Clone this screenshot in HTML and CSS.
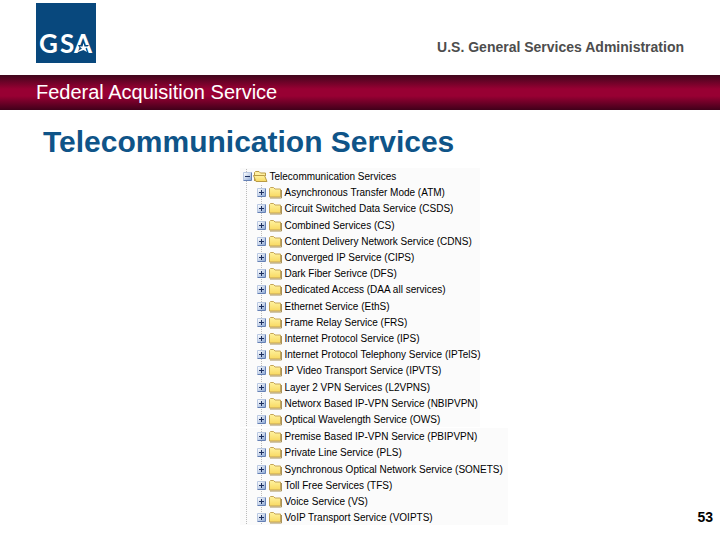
FILE: index.html
```html
<!DOCTYPE html>
<html lang="en">
<head>
  <meta charset="UTF-8">
  <title>Telecommunication Services</title>
  <link rel="stylesheet" href="styles.css">
</head>
<body>

  <svg class="sprites" aria-hidden="true">
    <defs>
      <linearGradient id="yellow" x1="0" y1="0" x2="0" y2="1">
        <stop offset="0" stop-color="#fff3a0"/>
        <stop offset="1" stop-color="#f8d860"/>
      </linearGradient>
      <linearGradient id="blue" x1="0" y1="0" x2="1" y2="1">
        <stop offset="0" stop-color="#ffffff"/>
        <stop offset="1" stop-color="#8faad6"/>
      </linearGradient>
    </defs>
    <symbol id="folder" viewBox="0 0 13 13">
      <path d="M1 12 H12.5 V4" fill="none" stroke="#a8925a"/>
      <path d="M.5 11 V2.5 L1.5 1.5 H4.5 L6 3 H11.5 V11 Z" fill="url(#yellow)" stroke="#c4a558"/>
    </symbol>
    <symbol id="folder-open" viewBox="0 0 15 13">
      <path d="M1.5 11 V2.5 L2.5 1.5 H6 L7.5 3 H12.5 V6" fill="#fff0a0" stroke="#b99b45"/>
      <path d="M.5 5.5 H11.5 L14 11.5 H3 Z" fill="url(#yellow)" stroke="#b99b45"/>
    </symbol>
    <symbol id="plus" viewBox="0 0 9 9">
      <path d="M.5 8.5 V.5 H8.5" fill="none" stroke="#b9c8e2"/>
      <rect x="1" y="1" width="7" height="7" fill="url(#blue)"/>
      <path d="M.5 8.5 H8.5 V.5" fill="none" stroke="#6580b4"/>
      <path d="M2 4.5 H7 M4.5 2 V7" stroke="#1c2f60"/>
    </symbol>
    <symbol id="minus" viewBox="0 0 9 9">
      <path d="M.5 8.5 V.5 H8.5" fill="none" stroke="#b9c8e2"/>
      <rect x="1" y="1" width="7" height="7" fill="url(#blue)"/>
      <path d="M.5 8.5 H8.5 V.5" fill="none" stroke="#6580b4"/>
      <path d="M2 4.5 H7" stroke="#1c2f60"/>
    </symbol>
  </svg>

  <header class="top">
    <svg class="logo" viewBox="0 0 60 60" role="img" aria-label="GSA">
      <rect width="60" height="60" fill="#08487d"/>
      <text class="logo-text" x="3 24 38" y="50">GSA</text>
      <path d="M42 42 L45 42 L47 37 L49 42 L53 42 L50 45 L52 50 H42 L44 46 Z" fill="#08487d"/>
      <path d="M39 50 L46 45.5 L43.5 43.5 L46.5 43.5 L47.5 40 L48.5 43.5 L52 43.5 L49.5 45.5 L51 49 L47.5 47 Z" fill="#fff"/>
    </svg>
    <p class="agency">U.S. General Services Administration</p>
  </header>

  <div class="banner">Federal Acquisition Service</div>

  <main>
    <h1>Telecommunication Services</h1>

    <div class="tree">
      <div class="panel">
        <div class="root">
          <button type="button" aria-label="Collapse"><svg><use href="#minus"/></svg></button>
          <svg class="folder-open"><use href="#folder-open"/></svg>
          <span>Telecommunication Services</span>
        </div>
        <ul id="list1"></ul>
      </div>
      <div class="panel panel-wide">
        <ul id="list2"></ul>
      </div>
    </div>
  </main>

  <footer>53</footer>

  <script src="tree.js"></script>
</body>
</html>
```
FILE: styles.css
```css
body {
  margin: 0;
  font-family: "Liberation Sans", Arial, sans-serif;
  background-color: #fff;
  color: #000;
}
.sprites {
  position: absolute;
  width: 0;
  height: 0;
}
.top {
  display: flex;
  justify-content: space-between;
  align-items: flex-end;
  padding: 3px 36px 12px;
}
.logo {
  width: 60px;
  height: 60px;
}
.logo-text {
  font-family: Lato, sans-serif;
  font-size: 26px;
  font-weight: bold;
  fill: #fff;
}
.agency {
  margin: 0 0 8px;
  font-size: 14px;
  line-height: 16px;
  font-weight: bold;
  color: #4d4d4d;
}
.banner {
  padding-left: 36px;
  font-size: 20px;
  line-height: 35px;
  color: #fff;
  background: linear-gradient(#40061c, #980033 40%, #980033 60%, #40001a);
}
h1 {
  margin: 16px 0 10px 43px;
  font-size: 30px;
  line-height: 32px;
  color: #0f5488;
}
.tree {
  display: flex;
  flex-direction: column;
  align-items: flex-start;
  gap: 1px;
  padding-left: 33.4%;
  font-size: 10px;
}
.panel {
  box-sizing: border-box;
  width: 240px;
  background: #fbfbfb linear-gradient(#fbfbfb 50%, #bbb 50%) 6px 0 / 1px 2px repeat-y;
}
.panel-wide {
  width: 268px;
}
.root, .panel li {
  display: flex;
  align-items: center;
  height: 16px;
  white-space: nowrap;
}
.root {
  gap: 1px;
  padding-left: 3px;
}
.panel ul {
  margin: 0;
  padding: 0 0 0 17px;
  list-style: none;
  background: linear-gradient(transparent 50%, #bbb 50%) 21px 0 / 1px 2px repeat-y;
}
.panel li {
  gap: 2px;
}
.panel li:nth-child(5n+3) {
  margin-top: 1px;
}
.panel button {
  display: block;
  flex: none;
  width: 9px;
  height: 9px;
  padding: 0;
  border: none;
  background: none;
  cursor: pointer;
}
.panel button svg {
  display: block;
  width: 9px;
  height: 9px;
}
.folder {
  flex: none;
  width: 13px;
  height: 13px;
  margin-left: 1px;
}
.folder-open {
  flex: none;
  width: 15px;
  height: 13px;
}
footer {
  position: absolute;
  right: 7px;
  bottom: 15px;
  font-size: 14px;
  line-height: 16px;
  font-weight: bold;
}
```
FILE: tree.js
```js
const first = [
  'Asynchronous Transfer Mode (ATM)',
  'Circuit Switched Data Service (CSDS)',
  'Combined Services (CS)',
  'Content Delivery Network Service (CDNS)',
  'Converged IP Service (CIPS)',
  'Dark Fiber Serivce (DFS)',
  'Dedicated Access (DAA all services)',
  'Ethernet Service (EthS)',
  'Frame Relay Service (FRS)',
  'Internet Protocol Service (IPS)',
  'Internet Protocol Telephony Service (IPTelS)',
  'IP Video Transport Service (IPVTS)',
  'Layer 2 VPN Services (L2VPNS)',
  'Networx Based IP-VPN Service (NBIPVPN)',
  'Optical Wavelength Service (OWS)'
];

const second = [
  'Premise Based IP-VPN Service (PBIPVPN)',
  'Private Line Service (PLS)',
  'Synchronous Optical Network Service (SONETS)',
  'Toll Free Services (TFS)',
  'Voice Service (VS)',
  'VoIP Transport Service (VOIPTS)'
];

function fill(id, names) {
  document.getElementById(id).innerHTML = names.map(name => `
    <li>
      <button type="button" aria-label="Expand ${name}"><svg><use href="#plus"/></svg></button>
      <svg class="folder"><use href="#folder"/></svg>
      <span>${name}</span>
    </li>`).join('');
}

fill('list1', first);
fill('list2', second);
```
